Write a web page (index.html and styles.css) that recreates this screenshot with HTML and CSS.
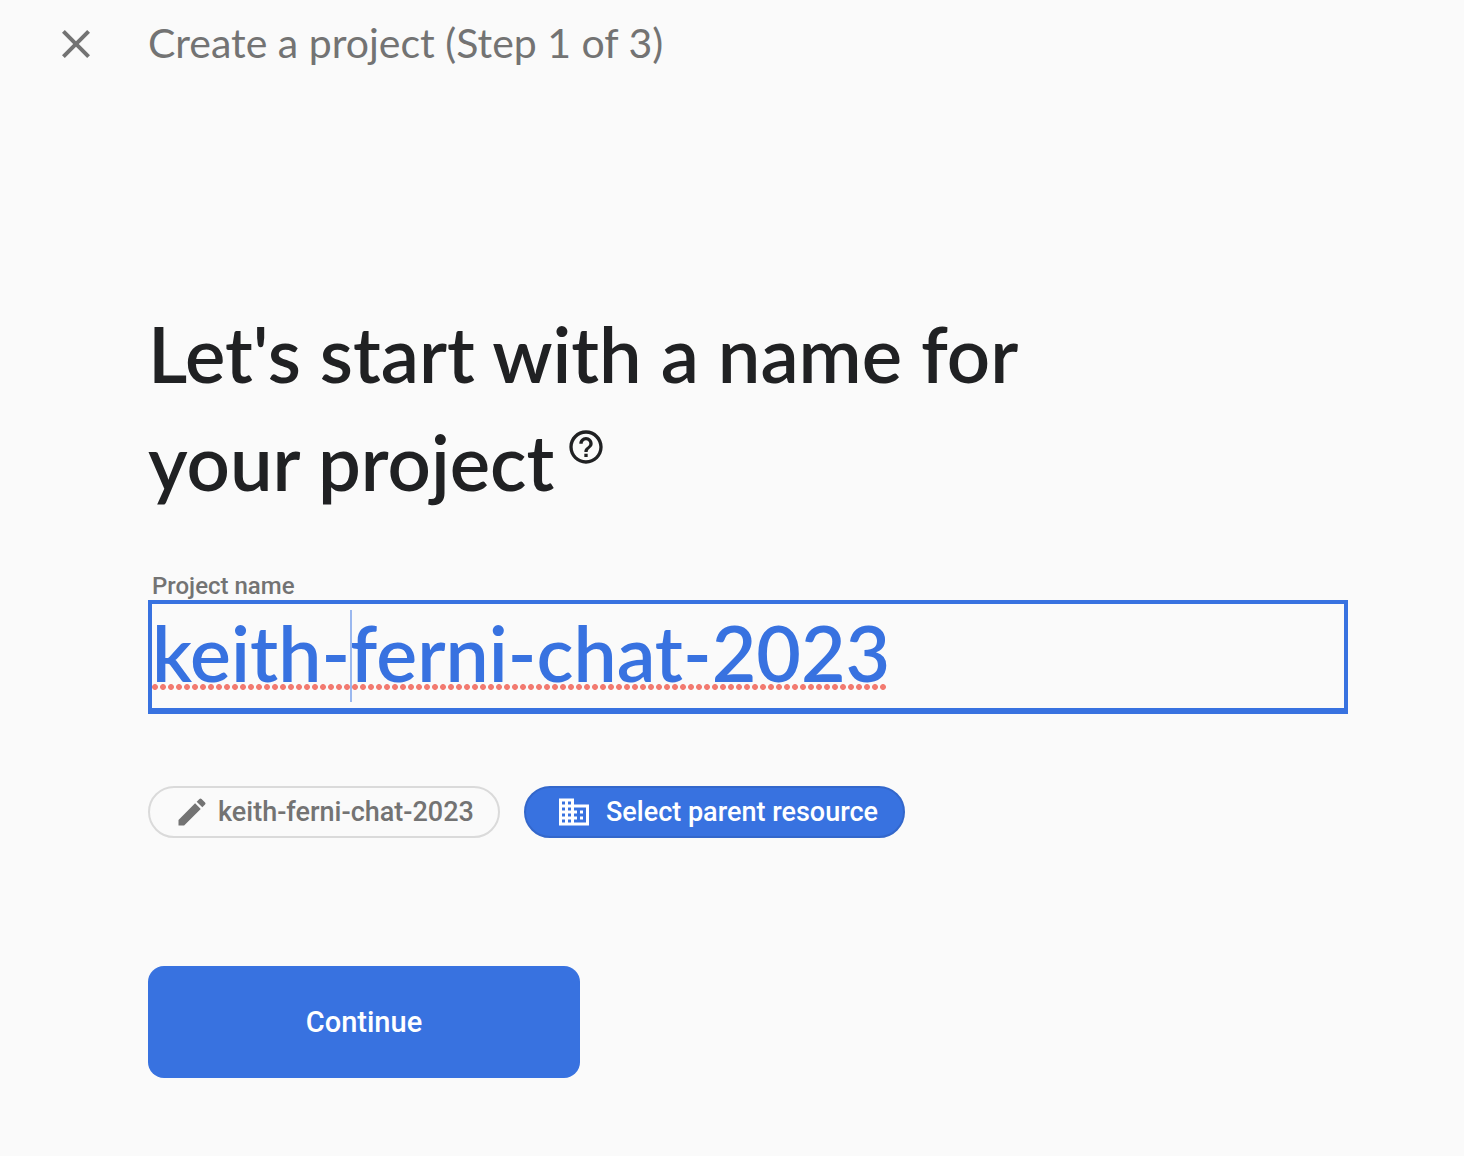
FILE: index.html
```html
<!DOCTYPE html>
<html lang="en">
<head>
  <meta charset="utf-8">
  <meta name="viewport" content="width=device-width, initial-scale=1">
  <title>Create a project</title>
  <link rel="stylesheet" href="styles.css">
</head>
<body>
  <header class="topbar">
    <button class="close" type="button" aria-label="Close">
      <svg viewBox="0 0 24 24" width="48" height="48" aria-hidden="true"><path fill="currentColor" d="M19 6.41 17.59 5 12 10.59 6.41 5 5 6.41 10.59 12 5 17.59 6.41 19 12 13.41 17.59 19 19 17.59 13.41 12z"/></svg>
    </button>
    <p class="step">Create a project (Step 1 of 3)</p>
  </header>
  <main class="content">
    <form class="form">
      <h1 class="title">Let's start with a name for<br>your project<button class="help" type="button" aria-label="Help"><svg viewBox="0 0 24 24" width="40" height="40" aria-hidden="true"><path fill="currentColor" d="M11 18h2v-2h-2v2zm1-16C6.480 2 2 6.480 2 12s4.480 10 10 10 10-4.480 10-10S17.520 2 12 2zm0 18c-4.410 0-8-3.590-8-8s3.590-8 8-8 8 3.590 8 8-3.590 8-8 8zm0-14c-2.210 0-4 1.790-4 4h2c0-1.100.900-2 2-2s2 .900 2 2c0 2-3 1.750-3 5h2c0-2.250 3-2.500 3-5 0-2.210-1.790-4-4-4z"/></svg></button></h1>
      <label class="label" for="project-name">Project name</label>
      <div class="field">
        <input class="input" id="project-name" type="text" value="keith-ferni-chat-2023" spellcheck="false">
        <span class="spelling"></span>
        <span class="caret"></span>
      </div>
      <div class="chips">
        <button class="chip" type="button">
          <svg viewBox="0 0 24 24" width="36" height="36" aria-hidden="true"><path fill="currentColor" d="M3 17.250V21h3.750L17.810 9.940l-3.750-3.750L3 17.250zM20.710 7.040a1 1 0 0 0 0-1.410l-2.340-2.340a1 1 0 0 0-1.410 0l-1.830 1.830 3.750 3.750 1.830-1.830z"/></svg>
          keith-ferni-chat-2023
        </button>
        <button class="chip chip-primary" type="button">
          <svg viewBox="0 0 24 24" width="36" height="36" aria-hidden="true"><path fill="currentColor" d="M12 7V3H2v18h20V7H12zM6 19H4v-2h2v2zm0-4H4v-2h2v2zm0-4H4V9h2v2zm0-4H4V5h2v2zm4 12H8v-2h2v2zm0-4H8v-2h2v2zm0-4H8V9h2v2zm0-4H8V5h2v2zm10 12h-8v-2h2v-2h-2v-2h2v-2h-2V9h8v10zm-2-8h-2v2h2v-2zm0 4h-2v2h2v-2z"/></svg>
          Select parent resource
        </button>
      </div>
      <button class="continue" type="submit">Continue</button>
    </form>
  </main>
</body>
</html>
```
FILE: styles.css
```css
* { box-sizing: border-box; }
body {
  margin: 0;
  background: #fafafa;
  color: #202123;
  font-family: Roboto, "Liberation Sans", sans-serif;
}
button { margin: 0; font: inherit; cursor: pointer; }
svg { display: block; flex: none; }

.topbar {
  display: flex;
  align-items: center;
  gap: 48px;
  padding: 16px 52px;
  color: #737373;
}
.close {
  padding: 0;
  border: 0;
  background: none;
  color: inherit;
}
.step {
  margin: 0;
  padding-bottom: 2px;
  font: 400 41px/54px Lato, sans-serif;
}

.content { padding: 212px 116px 78px 148px; }
.form {
  display: flex;
  flex-direction: column;
  align-items: flex-start;
}
.title {
  margin: 0;
  font: 600 76px/108px Lato, sans-serif;
}
.help {
  margin-left: 12px;
  padding: 0;
  border: 0;
  background: none;
  color: inherit;
  line-height: 1;
  vertical-align: 24px;
}
.label {
  margin-top: 56px;
  padding-left: 4px;
  color: #737373;
  font-size: 24px;
  font-weight: 500;
  line-height: 28px;
}
.field {
  position: relative;
  width: 100%;
}
.input {
  display: block;
  width: 100%;
  height: 114px;
  padding: 0 0 8px;
  border: 4px solid #3872e0;
  border-bottom-width: 6px;
  border-radius: 0;
  outline: 0;
  background: none;
  color: #3872e0;
  font: 600 77px/96px Lato, sans-serif;
}
.spelling {
  position: absolute;
  left: 4px;
  top: 84px;
  width: 734px;
  height: 6px;
  background: radial-gradient(circle at 3px 3px, #f27a70 0 78%, #f27a7000 100%) 0 0 / 8px 6px repeat-x;
  background-image: radial-gradient(circle 3px at 3px 3px, #f27a70 84%, #f27a7000 110%);
}
.caret {
  position: absolute;
  left: 202px;
  top: 10px;
  width: 2px;
  height: 92px;
  background: #9bb8ef;
}

.chips {
  display: flex;
  flex-wrap: wrap;
  gap: 24px;
  margin-top: 72px;
}
.chip {
  display: flex;
  align-items: center;
  gap: 8px;
  min-width: 352px;
  height: 52px;
  padding: 0 24px;
  border: 2px solid #dadada;
  border-radius: 26px;
  background: none;
  color: #737373;
  font-size: 27px;
  font-weight: 500;
}
.chip-primary {
  gap: 14px;
  min-width: 381px;
  padding-left: 30px;
  border-color: #3367cb;
  background: #3872e0;
  color: #fff;
}
.continue {
  width: 432px;
  max-width: 100%;
  height: 112px;
  margin-top: 128px;
  border: 0;
  border-radius: 16px;
  background: #3872e0;
  color: #fff;
  font-size: 29px;
  font-weight: 500;
}
```
